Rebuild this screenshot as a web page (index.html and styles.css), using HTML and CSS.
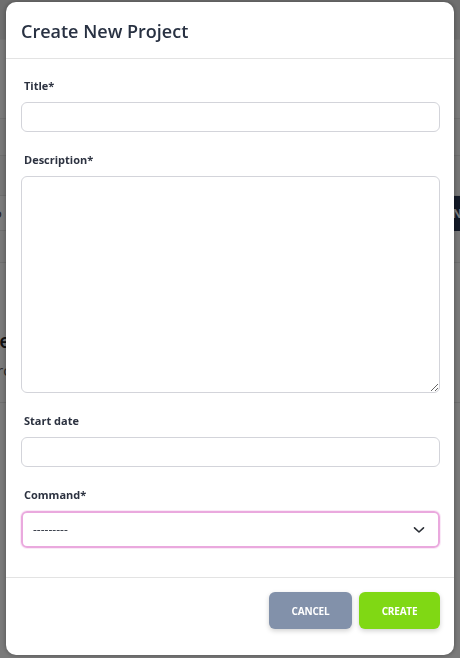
FILE: index.html
```html
<!DOCTYPE html>
<html lang="en">
<head>
<meta charset="utf-8">
<title>Create New Project</title>
<link rel="stylesheet" href="styles.css">
</head>
<body>
<div class="page">
  <div class="topbar"></div>
  <div class="spacer"></div>
  <div class="table">
    <div class="row"></div>
    <div class="row"></div>
    <div class="row row-action"><span class="cell-text">Info</span><span class="action">OPEN</span></div>
    <div class="row"></div>
  </div>
  <div class="section">
    <div class="section-title">Team</div>
    <div class="section-sub">Projects</div>
  </div>
</div>

<div class="overlay">
  <div class="modal">
    <div class="modal-header">
      <h2 class="modal-title">Create New Project</h2>
    </div>
    <form class="modal-body">
      <div class="field">
        <label class="label" for="title">Title*</label>
        <input class="input" id="title" type="text">
      </div>
      <div class="field">
        <label class="label" for="desc">Description*</label>
        <textarea class="input textarea" id="desc"></textarea>
      </div>
      <div class="field">
        <label class="label" for="start">Start date</label>
        <input class="input" id="start" type="text">
      </div>
      <div class="field">
        <label class="label" for="cmd">Command*</label>
        <div class="select">
          <span class="select-value">---------</span>
          <svg class="chevron" width="12" height="8" viewBox="0 0 12 8"><path d="M1.5 1.8 L6 6 L10.5 1.8" fill="none" stroke="#2b2f36" stroke-width="1.6" stroke-linecap="round" stroke-linejoin="round"/></svg>
        </div>
      </div>
    </form>
    <div class="modal-footer">
      <button class="btn btn-cancel" type="button">CANCEL</button>
      <button class="btn btn-create" type="button">CREATE</button>
    </div>
  </div>
</div>
</body>
</html>
```

FILE: styles.css
```css
* { box-sizing: border-box; }

html, body {
  margin: 0;
  padding: 0;
  width: 460px;
  height: 658px;
  overflow: hidden;
}

body {
  font-family: "Open Sans", "Noto Sans", sans-serif;
  background: #f4f4f4;
}

/* background page (dimmed) */
.page {
  width: 460px;
  height: 658px;
}
.topbar {
  height: 40px;
  background: #dedede;
  border-bottom: 1px solid #e6e6e6;
}
.spacer { height: 78px; }
.table {
  border-top: 1px solid #e0e0e0;
}
.row {
  height: 37px;
  border-bottom: 1px solid #dcdcdc;
  background: #f0f0f0;
}
.row:nth-child(2) { height: 40px; background: #ececec; }
.row-action {
  height: 35px;
  display: flex;
  justify-content: space-between;
  align-items: center;
  background: #f6f6f6;
}
.cell-text {
  font-size: 13px;
  color: #333;
  margin-left: -22px;
}
.action {
  background: #26334d;
  color: #fff;
  font-size: 12px;
  font-weight: 700;
  height: 35px;
  line-height: 35px;
  padding: 0 6px;
  margin-right: -8px;
}
.row:last-child { height: 32px; }
.section {
  padding-top: 64px;
  border-bottom: 1px solid #dcdcdc;
  height: 140px;
}
.section-title {
  font-size: 20px;
  font-weight: 600;
  color: #222;
  margin-left: -12px;
}
.section-sub {
  font-size: 15px;
  color: #555;
  margin-top: 6px;
  margin-left: -12px;
}

/* overlay + modal */
.overlay {
  position: fixed;
  inset: 0;
  background: rgba(0, 0, 0, 0.5);
}
.modal {
  position: absolute;
  left: 6px;
  top: 2px;
  width: 448px;
  height: 653px;
  background: #fff;
  border-radius: 10px;
  box-shadow: 0 0 5px rgba(0, 0, 0, 0.35);
  display: flex;
  flex-direction: column;
}
.modal-header {
  height: 57px;
  padding: 0 15px;
  display: flex;
  align-items: center;
  border-bottom: 1px solid #e3e3e3;
}
.modal-title {
  margin: 0;
  font-size: 18px;
  font-weight: 600;
  color: #283142;
  line-height: 24px;
  padding-top: 1px;
}
.modal-body {
  margin: 0;
  padding: 19px 14px 9px 15px;
  flex: 1;
  border-bottom: 1px solid #e3e3e3;
}
.field {
  display: flex;
  flex-direction: column;
  margin-bottom: 20px;
}
.label {
  font-size: 11px;
  font-weight: 700;
  line-height: 16px;
  color: #2c3240;
  margin: 0 0 8px 3px;
}
.input {
  display: block;
  width: 100%;
  height: 30px;
  border: 1px solid #d3d4da;
  border-radius: 6px;
  background: #fff;
  font-family: inherit;
  font-size: 12px;
  padding: 0 10px;
  outline: none;
}
.textarea {
  height: 217px;
  resize: vertical;
  padding: 8px 10px;
}
.select {
  height: 37px;
  border: 2px solid #eaa9de;
  border-radius: 6px;
  display: flex;
  align-items: center;
  justify-content: space-between;
  padding: 0 13px 0 10px;
  box-shadow: 0 0 0 1px rgba(234, 169, 222, 0.25);
}
.select-value {
  font-size: 12px;
  color: #2f3540;
  letter-spacing: 0;
}
.chevron { display: block; margin-top: 1px; }

.modal-footer {
  height: 77px;
  display: flex;
  justify-content: flex-end;
  align-items: flex-start;
  gap: 7px;
  padding: 14px 14px 0 0;
}
.btn {
  height: 37px;
  border: 0;
  border-radius: 6px;
  color: #fff;
  font-family: inherit;
  font-size: 10px;
  font-weight: 700;
  letter-spacing: -0.2px;
  box-shadow: 0 2px 5px rgba(0, 0, 0, 0.18);
  cursor: pointer;
}
.btn-cancel {
  width: 83px;
  background: #8291aa;
}
.btn-create {
  width: 81px;
  background: #80d814;
}
```
